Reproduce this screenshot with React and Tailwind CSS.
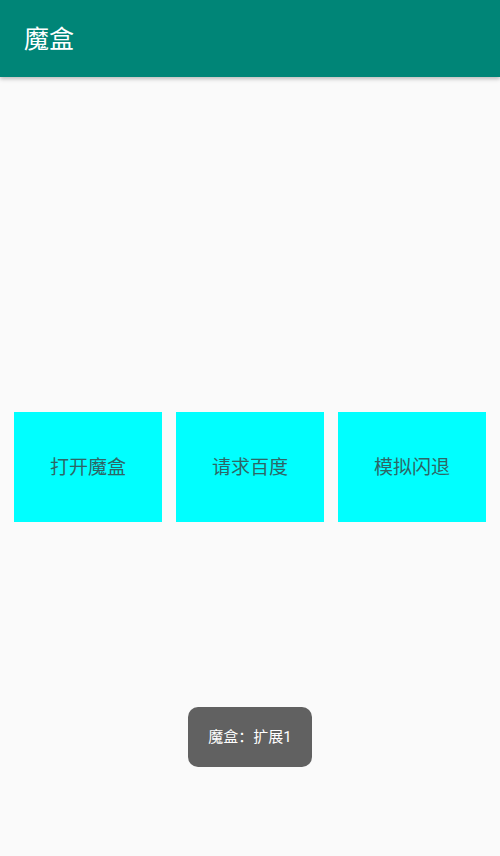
import React from 'react';

const font = { fontFamily: '"Roboto", "Noto Sans CJK SC", sans-serif' };

const buttons = ['打开魔盒', '请求百度', '模拟闪退'];

export default function App() {
  return (
    <div className="relative w-[500px] h-[856px] bg-[#fafafa] flex flex-col overflow-hidden" style={font}>
      <header className="h-[77px] shrink-0 bg-[#008577] flex items-center px-6 pt-[2px] shadow-[0_2px_4px_rgba(0,0,0,0.25)] z-10">
        <h1 className="text-[25px] text-white leading-none">魔盒</h1>
      </header>

      <main className="flex-1 flex items-center justify-center">
        <div className="flex gap-[14px]">
          {buttons.map((b) => (
            <button
              key={b}
              className="w-[148px] h-[110px] pt-[3px] bg-[#00ffff] text-[19px] text-[#2e6666] flex items-center justify-center"
            >
              {b}
            </button>
          ))}
        </div>
      </main>

      {/* toast */}
      <div className="absolute left-[188px] top-[707px] w-[124px] h-[60px] rounded-[10px] bg-[#616161] text-white text-[15px] flex items-center justify-center">
        魔盒：扩展1
      </div>
    </div>
  );
}
